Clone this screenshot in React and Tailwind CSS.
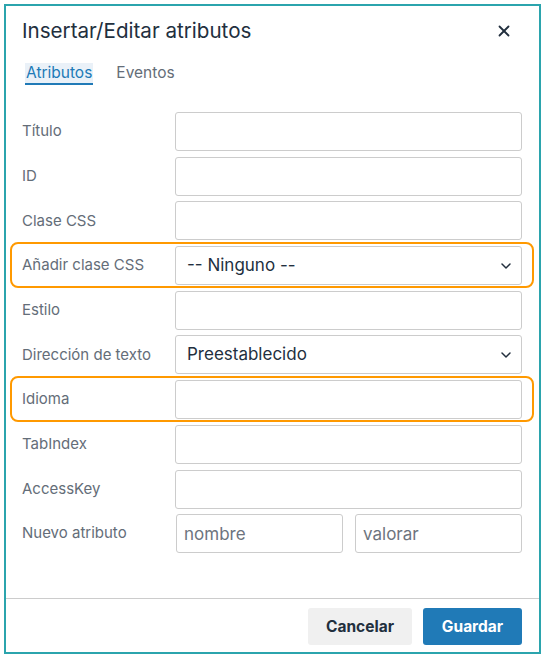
import React from "react";
import { X, ChevronDown } from "lucide-react";

const rows = [
  { label: "Título" },
  { label: "ID" },
  { label: "Clase CSS" },
  { label: "Añadir clase CSS", select: "-- Ninguno --", mark: true },
  { label: "Estilo" },
  { label: "Dirección de texto", select: "Preestablecido" },
  { label: "Idioma", mark: true },
  { label: "TabIndex" },
  { label: "AccessKey" },
];

const field =
  "h-[39px] w-full rounded-[3px] border border-[#cccccc] bg-white text-[17px] text-[#222f3e] outline-none placeholder:text-[#6d747e]";

const Row = ({ label, select, mark }) => (
  <div className="relative grid grid-cols-[153px_1fr] items-center">
    {mark && (
      <span className="pointer-events-none absolute -top-[4px] -bottom-[3px] -left-[12px] -right-[12px] rounded-[8px] border-2 border-[#ff9900]"></span>
    )}
    <label className="text-[15px] text-[#646d78]">{label}</label>
    {select ? (
      <div className={`${field} flex items-center justify-between pl-[11px] pr-[7px]`}>
        <span>{select}</span>
        <ChevronDown size={16} strokeWidth={2.2} className="text-[#222f3e]" />
      </div>
    ) : (
      <input className={`${field} px-[11px]`} />
    )}
  </div>
);

const App = () => {
  return (
    <div className="h-[657px] w-[545px] bg-white pt-[4px] pl-[4px]" style={{ fontFamily: "Inter, 'Noto Sans', sans-serif" }}>
      <div className="flex h-[650px] w-[537px] flex-col border-2 border-[#2ba4ad] bg-white">
        <header className="flex items-center justify-between pl-[16px] pr-[26px] pt-[11px]">
          <h1 className="text-[20.6px] leading-[28px] text-[#222f3e]">Insertar/Editar atributos</h1>
          <X size={18} strokeWidth={2.4} className="text-[#222f3e]" />
        </header>

        <nav className="mt-[18px] flex gap-[23px] pl-[19px]">
          <span className="border-b-2 border-[#207ab7] bg-[#eaf1f8] px-[1px] text-[15.5px] leading-[20px] text-[#207ab7]">
            Atributos
          </span>
          <span className="text-[15.5px] leading-[20px] text-[#646d78]">Eventos</span>
        </nav>

        <div className="mt-[27px] flex flex-col gap-[5.7px] pl-[16px] pr-[17px]">
          {rows.map((r, i) => (
            <Row key={i} {...r} />
          ))}
          <div className="grid grid-cols-[153px_1fr] items-center">
            <label className="text-[15px] text-[#646d78]">Nuevo atributo</label>
            <div className="flex gap-[12px]">
              <input className={`${field} ml-[1px] px-[7px]`} placeholder="nombre" />
              <input className={`${field} px-[7px]`} placeholder="valorar" />
            </div>
          </div>
        </div>

        <footer className="mt-auto flex justify-end gap-[11px] border-t border-[#cccccc] px-[17px] pt-[9px] pb-[7px]">
          <button className="h-[37px] w-[104px] rounded-[3px] bg-[#f0f0f0] text-[15.5px] font-bold text-[#222f3e]">
            Cancelar
          </button>
          <button className="h-[37px] w-[99px] rounded-[3px] bg-[#207ab7] text-[15.5px] font-bold text-white">
            Guardar
          </button>
        </footer>
      </div>
    </div>
  );
};

export default App;
